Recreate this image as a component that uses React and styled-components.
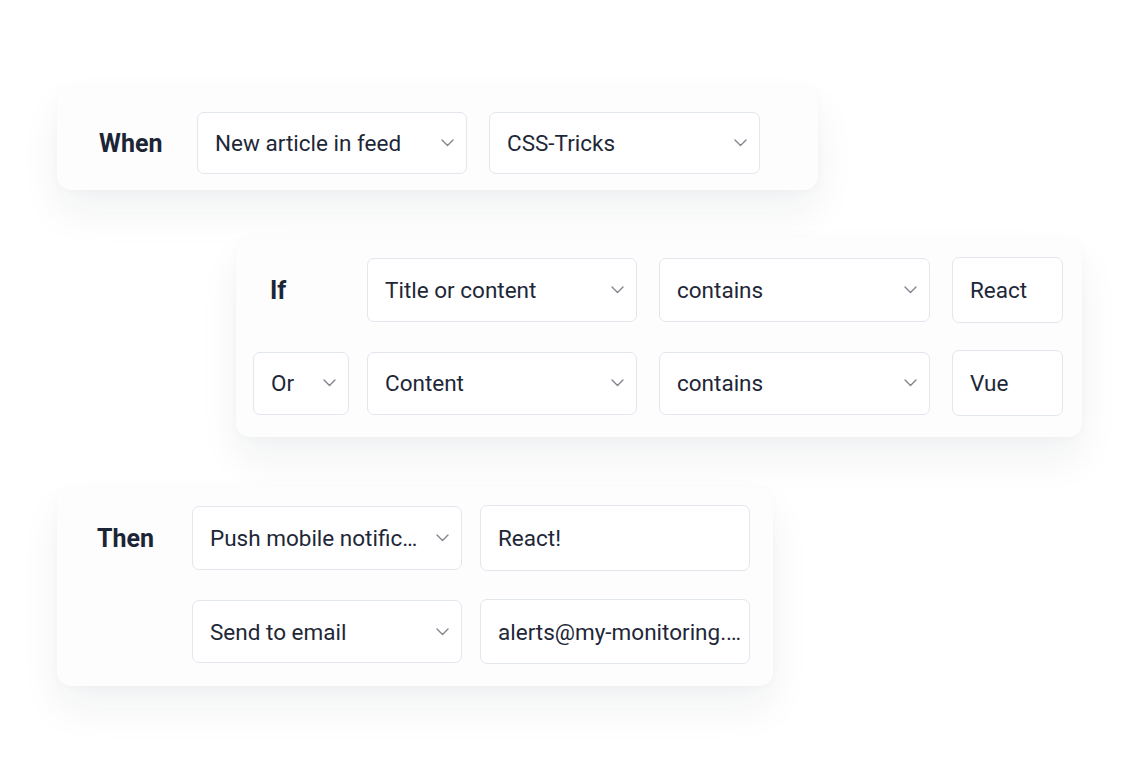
import React from 'react';
import styled, { createGlobalStyle } from 'styled-components';

const GlobalStyle = createGlobalStyle`
  body {
    margin: 0;
    background: #FFFFFF;
    font-family: 'Roboto', 'Liberation Sans', sans-serif;
    color: #1E2738;
  }
`;

const Page = styled.div`
  width: 1140px;
  height: 780px;
  padding-top: 85px;
  box-sizing: border-box;
  overflow: hidden;
`;

const Card = styled.div`
  box-sizing: border-box;
  width: ${p => p.width}px;
  margin-left: ${p => p.left}px;
  margin-top: ${p => p.top || 0}px;
  padding: ${p => p.pad};
  background: #FDFDFD;
  border-radius: 14px;
  box-shadow: 0px 22px 40px rgba(20, 30, 50, 0.06), 0px 2px 10px rgba(20, 30, 50, 0.025);
  display: flex;
  flex-direction: column;
  gap: ${p => p.rowGap || 0}px;
`;

const Row = styled.div`
  display: flex;
  align-items: center;
  gap: ${p => p.gap || 22}px;
`;

const Label = styled.div`
  width: ${p => p.width}px;
  flex-shrink: 0;
  padding-left: ${p => p.indent || 0}px;
  box-sizing: border-box;
  font-weight: 700;
  font-size: 25px;
  color: #1C2536;
  margin-right: ${p => p.pull || 0}px;
`;

const Field = styled.div`
  box-sizing: border-box;
  width: ${p => p.width}px;
  height: ${p => p.height || 63}px;
  flex-shrink: 0;
  background: #FFFFFF;
  border: 1.5px solid #E2E6ED;
  border-radius: 7px;
  padding: 0 ${p => (p.select ? 36 : 12)}px 0 17px;
  display: flex;
  align-items: center;
  position: relative;
  font-size: 22.5px;
  color: #1E2738;
  margin-right: ${p => p.pull || 0}px;
`;

const FieldText = styled.span`
  white-space: nowrap;
`;

const Chevron = styled.svg`
  position: absolute;
  right: 12px;
  top: 50%;
  width: 13px;
  height: 8px;
  margin-top: -4px;
`;

const Select = ({ children, ...rest }) => (
  <Field select {...rest}>
    <FieldText>{children}</FieldText>
    <Chevron viewBox="0 0 13 8">
      <polyline points="1,1 6.5,6.5 12,1" fill="none" stroke="#80858D" strokeWidth="1.4" strokeLinecap="round" strokeLinejoin="round" />
    </Chevron>
  </Field>
);

const Input = ({ children, ...rest }) => (
  <Field {...rest}>
    <FieldText>{children}</FieldText>
  </Field>
);

export default function App() {
  return (
    <>
      <GlobalStyle />
      <Page>
        <Card width={761} left={57} pad="27px 0 16px 42px">
          <Row>
            <Label width={76}>When</Label>
            <Select width={270} height={62}>New article in feed</Select>
            <Select width={271} height={62}>CSS-Tricks</Select>
          </Row>
        </Card>

        <Card width={846} left={236} top={48} pad="19px 20px 21px 17px" rowGap={27}>
          <Row>
            <Label width={96} indent={17} pull={-4}>If</Label>
            <Select width={270} height={64}>Title or content</Select>
            <Select width={271} height={64}>contains</Select>
            <Input width={111} height={66}>React</Input>
          </Row>
          <Row>
            <Select width={96} pull={-4}>Or</Select>
            <Select width={270}>Content</Select>
            <Select width={271}>contains</Select>
            <Input width={111} height={66}>Vue</Input>
          </Row>
        </Card>

        <Card width={716} left={57} top={50} pad="18px 23px 22px 40px" rowGap={28}>
          <Row gap={18}>
            <Label width={77}>Then</Label>
            <Select width={270} height={64}>Push mobile notific…</Select>
            <Input width={270} height={66}>React!</Input>
          </Row>
          <Row gap={18}>
            <Label width={77} />
            <Select width={270}>Send to email</Select>
            <Input width={270} height={65}>alerts@my-monitoring.…</Input>
          </Row>
        </Card>
      </Page>
    </>
  );
}
